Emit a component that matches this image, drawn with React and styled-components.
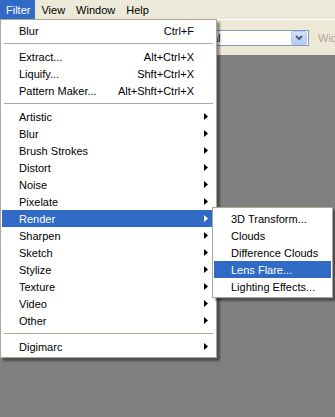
import React from "react";
import styled, { createGlobalStyle } from "styled-components";

const GlobalStyle = createGlobalStyle`
  html, body { margin: 0; padding: 0; background: #808080; }
  body { font-family: "Liberation Sans", Arial, sans-serif; font-size: 11px; }
  * { box-sizing: border-box; }
`;

const Page = styled.div`
  position: relative;
  width: 335px;
  height: 417px;
  overflow: hidden;
  display: flex;
  flex-direction: column;
  background: #808080;
`;

const MenuBar = styled.div`
  height: 19px;
  display: flex;
  align-items: stretch;
  background: #ece9d8;
`;

const MenuBarItem = styled.div`
  padding: 0 5px 0 6px;
  display: flex;
  align-items: center;
  font-size: 11px;
  color: ${(p) => (p.$active ? "#fff" : "#000")};
  background: ${(p) => (p.$active ? "#316ac5" : "transparent")};
`;

const OptionsBar = styled.div`
  height: 36px;
  border-top: 1px solid #fff;
  background: #ece9d8;
  display: flex;
  align-items: center;
  padding-left: 181px;
`;

const Combo = styled.div`
  flex: none;
  width: 128px;
  height: 16px;
  border: 1px solid #7f9db9;
  background: #fff;
  display: flex;
  align-items: stretch;
`;

const ComboText = styled.div`
  flex: 1;
  padding-left: 3px;
  line-height: 14px;
  font-size: 11px;
  color: #000;
`;

const ComboButton = styled.div`
  width: 16px;
  margin: 0 1px 0 0;
  border: 1px solid #b9cdf7;
  border-radius: 2px;
  background: linear-gradient(#d6e1fb, #b6c9f5);
  display: flex;
  align-items: center;
  justify-content: center;
`;

const FieldLabel = styled.div`
  flex: none;
  margin-left: 9px;
  font-size: 11px;
  color: #aca899;
  white-space: nowrap;
`;

const Workspace = styled.div`
  flex: 1;
  background: #808080;
`;

const MenuPanel = styled.div`
  position: absolute;
  top: ${(p) => p.$top}px;
  left: ${(p) => p.$left}px;
  width: ${(p) => p.$width}px;
  background: #fff;
  border: 1px solid #aca899;
  padding: 2px 1px;
  box-shadow: 3px 3px 2px rgba(0, 0, 0, 0.4);
`;

const Row = styled.div`
  height: 17px;
  display: flex;
  align-items: center;
  padding-left: 17px;
  white-space: nowrap;
  font-size: 11px;
  color: ${(p) => (p.$active ? "#fff" : "#000")};
  background: ${(p) => (p.$active ? "#316ac5" : "transparent")};
`;

const Label = styled.span`
  flex: 1;
`;

const Shortcut = styled.span``;

const ArrowSlot = styled.span`
  width: ${(p) => p.$w}px;
  flex: none;
  display: flex;
  align-items: center;
  padding-left: 10px;
`;

const Separator = styled.div`
  height: 9px;
  padding: 4px 2px 0;
  &::after {
    content: "";
    display: block;
    height: 1px;
    background: #aca899;
  }
`;

const Arrow = ({ color }) => (
  <svg width="4" height="7" viewBox="0 0 4 7">
    <polygon points="0,0 4,3.5 0,7" fill={color} />
  </svg>
);

const Chevron = () => (
  <svg width="8" height="6" viewBox="0 0 8 6">
    <polyline points="1,1 4,4 7,1" fill="none" stroke="#4d6185" strokeWidth="2" />
  </svg>
);

const mainItems = [
  { label: "Blur", shortcut: "Ctrl+F" },
  { sep: true },
  { label: "Extract...", shortcut: "Alt+Ctrl+X" },
  { label: "Liquify...", shortcut: "Shft+Ctrl+X" },
  { label: "Pattern Maker...", shortcut: "Alt+Shft+Ctrl+X" },
  { sep: true },
  { label: "Artistic", sub: true },
  { label: "Blur", sub: true },
  { label: "Brush Strokes", sub: true },
  { label: "Distort", sub: true },
  { label: "Noise", sub: true },
  { label: "Pixelate", sub: true },
  { label: "Render", sub: true, active: true },
  { label: "Sharpen", sub: true },
  { label: "Sketch", sub: true },
  { label: "Stylize", sub: true },
  { label: "Texture", sub: true },
  { label: "Video", sub: true },
  { label: "Other", sub: true },
  { sep: true },
  { label: "Digimarc", sub: true },
];

const subItems = [
  { label: "3D Transform..." },
  { label: "Clouds" },
  { label: "Difference Clouds" },
  { label: "Lens Flare...", active: true },
  { label: "Lighting Effects..." },
];

const MenuRows = ({ items, slot }) =>
  items.map((it, i) =>
    it.sep ? (
      <Separator key={i} />
    ) : (
      <Row key={i} $active={it.active}>
        <Label>{it.label}</Label>
        {it.shortcut && <Shortcut>{it.shortcut}</Shortcut>}
        <ArrowSlot $w={slot}>
          {it.sub && <Arrow color={it.active ? "#fff" : "#000"} />}
        </ArrowSlot>
      </Row>
    )
  );

export default function App() {
  return (
    <Page>
      <GlobalStyle />
      <MenuBar>
        <MenuBarItem $active>Filter</MenuBarItem>
        <MenuBarItem>View</MenuBarItem>
        <MenuBarItem>Window</MenuBarItem>
        <MenuBarItem>Help</MenuBarItem>
      </MenuBar>
      <OptionsBar>
        <Combo>
          <ComboText>Normal</ComboText>
          <ComboButton>
            <Chevron />
          </ComboButton>
        </Combo>
        <FieldLabel>Width:</FieldLabel>
      </OptionsBar>
      <Workspace />
      <MenuPanel $top={19} $left={0} $width={217}>
        <MenuRows items={mainItems} slot={21} />
      </MenuPanel>
      <MenuPanel $top={207} $left={212} $width={121}>
        <MenuRows items={subItems} slot={8} />
      </MenuPanel>
    </Page>
  );
}
